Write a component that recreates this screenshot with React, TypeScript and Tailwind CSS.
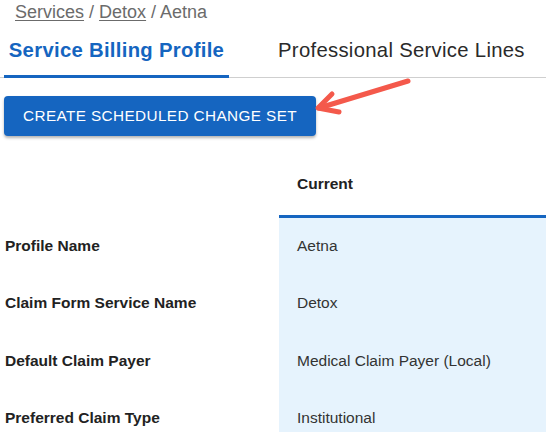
import React from "react";

const rows = [
  ["Profile Name", "Aetna"],
  ["Claim Form Service Name", "Detox"],
  ["Default Claim Payer", "Medical Claim Payer (Local)"],
  ["Preferred Claim Type", "Institutional"],
];

export default function App() {
  return (
    <div className="relative w-[546px] h-[432px] overflow-hidden bg-white font-['Liberation_Sans',Arial,sans-serif]">
      <div className="h-[24px] pl-[15px] text-[18px] leading-[24px] text-[#6b6b6b]">
        <span className="underline underline-offset-2">Services</span>
        <span> / </span>
        <span className="underline underline-offset-2">Detox</span>
        <span> / Aetna</span>
      </div>
      <div className="relative flex h-[54px] border-b border-[#cfcfcf]">
        <div className="relative ml-[4px] flex w-[225px] items-center justify-center whitespace-nowrap text-[20.3px] font-bold tracking-[0.3px] text-[#1565c0]">
          Service Billing Profile
          <div className="absolute bottom-[-1px] left-0 right-0 h-[3px] bg-[#1565c0]" />
        </div>
        <div className="flex items-center whitespace-nowrap pl-[49px] text-[20.3px] tracking-[0.3px] text-[#2a2a2a]">
          Professional Service Lines
        </div>
      </div>
      <div className="pl-[4px] pt-[18px]">
        <div className="flex h-[40px] w-[312px] items-center justify-center whitespace-nowrap rounded-[4px] bg-[#1565c0] text-[15.3px] uppercase tracking-[0.4px] text-white shadow-[0_2px_3px_rgba(0,0,0,0.3)]">
          Create Scheduled Change Set
        </div>
      </div>
      <svg className="absolute left-0 top-0" width="546" height="432" viewBox="0 0 546 432">
        <g stroke="#f4594b" strokeWidth="5" strokeLinecap="round" strokeLinejoin="round" fill="none">
          <line x1="408" y1="81" x2="319" y2="108" />
          <polyline points="332,94 318,108 339,112" />
        </g>
      </svg>
      <div className="grid grid-cols-[279px_267px]">
        <div className="h-[79px]" />
        <div className="flex h-[79px] items-center pl-[18px] pt-[17px] text-[15.5px] font-bold text-[#222]">
          Current
        </div>
        <div />
        <div className="h-[3px] bg-[#1565c0]" />
        {rows.map(([label, value]) => (
          <React.Fragment key={label}>
            <div className="flex h-[57.5px] items-center whitespace-nowrap pb-[3px] pl-[5px] text-[15.5px] font-bold text-[#222]">
              {label}
            </div>
            <div className="flex h-[57.5px] items-center whitespace-nowrap bg-[#e6f3fd] pb-[3px] pl-[18px] text-[15.5px] text-[#333]">
              {value}
            </div>
          </React.Fragment>
        ))}
      </div>
    </div>
  );
}
